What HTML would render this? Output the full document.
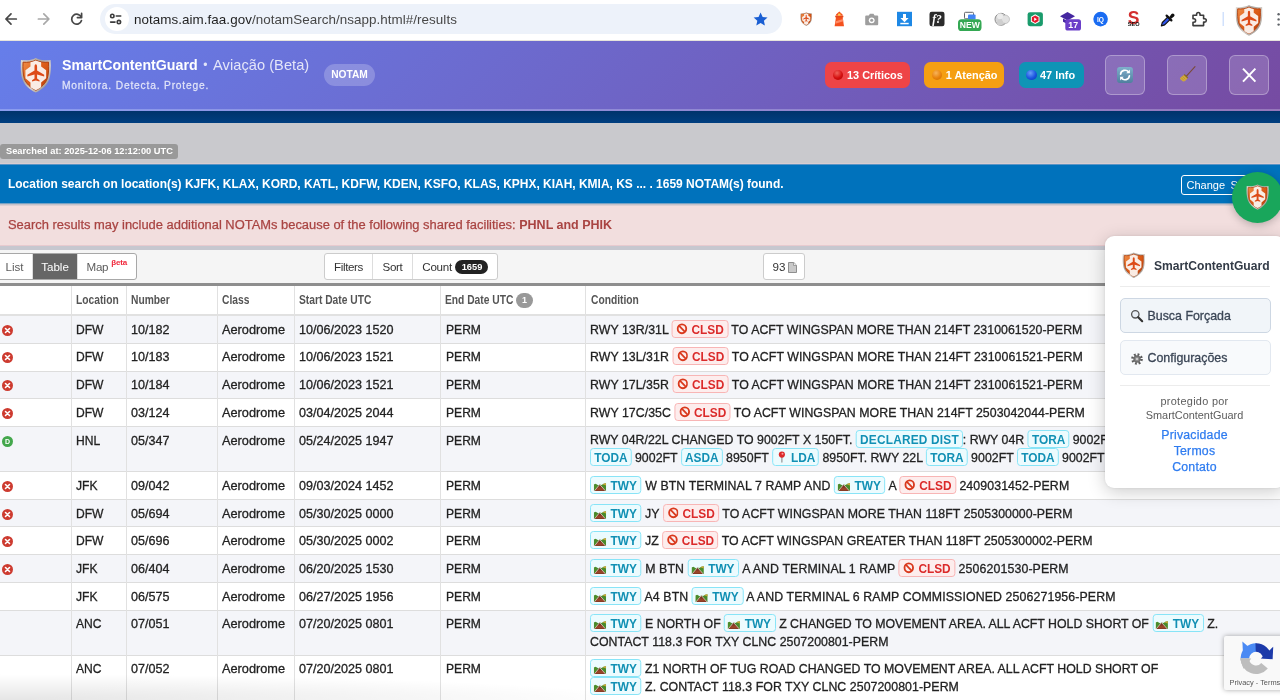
<!DOCTYPE html>
<html lang="en">
<head>
<meta charset="utf-8">
<title>NOTAM Search</title>
<style>
*{box-sizing:border-box;margin:0;padding:0}
html,body{width:1280px;height:700px;overflow:hidden;background:#fff}
body{will-change:transform;font-family:"Liberation Sans",Arial,Helvetica,sans-serif;color:#222;position:relative}
.abs{position:absolute}
/* browser chrome */
#chrome{left:0;top:0;width:1280px;height:41px;background:#fff;border-bottom:1px solid #e6e4dc}
#url{left:100px;top:4px;width:682px;height:30px;border-radius:15px;background:#edf2fa}
#url .tune{left:5px;top:3px;width:24px;height:24px;border-radius:12px;background:#fff}
#url .txt{left:34px;top:.6px;line-height:30px;font-size:13.42px;color:#1f1f1f;white-space:nowrap;letter-spacing:.05px}
#url .txt span{color:#474747}
/* purple header */
#scg{left:0;top:41px;width:1280px;height:70px;background:linear-gradient(135deg,#667eea 0%,#764ba2 100%);border-bottom:2px solid rgba(255,255,255,.24)}
#scg .t1{left:62px;top:14px;font-size:14.2px;font-weight:bold;color:#fff;white-space:nowrap;line-height:20px}
#scg .t1 span{font-weight:normal;color:rgba(255,255,255,.82);font-size:14.6px;letter-spacing:.05px}
#scg .t1 i{font-style:normal;font-weight:normal;font-size:12px;display:inline-block;width:15.5px;text-align:center;position:relative;top:-1px;color:rgba(255,255,255,.8)}
#scg .t2{left:62px;top:38px;font-size:10.25px;color:rgba(255,255,255,.74);white-space:nowrap;letter-spacing:.81px;line-height:14px;-webkit-text-stroke:.3px rgba(255,255,255,.6)}
#scg .pill{left:324px;top:23px;width:51px;height:22px;border-radius:11px;background:rgba(255,255,255,.22);color:#fff;font-size:10.2px;font-weight:bold;text-align:center;line-height:22px}
.bdg{top:21px;height:26px;border-radius:6.5px;color:#fff;font-size:10.9px;font-weight:bold;line-height:26px;white-space:nowrap;padding-left:21px}
.bdg i{position:absolute;left:7.5px;top:7.5px;width:10.5px;height:10.5px;border-radius:6px}
.hbtn{top:14px;width:40px;height:40px;border-radius:6px;background:rgba(255,255,255,.16);border:1px solid rgba(255,255,255,.3)}
/* bands */
#navy{left:0;top:111px;width:1280px;height:12px;background:linear-gradient(#00336b,#003f80)}
#grey{left:0;top:123px;width:1280px;height:41px;background:#c9c9cd}
#tag{left:0;top:144px;width:178px;height:15px;border-radius:3px;background:#999;color:#fff;font-size:9.28px;font-weight:bold;line-height:15px;padding-left:6px;white-space:nowrap}
#blue{left:0;top:163px;width:1280px;height:43px;background:linear-gradient(#d9cdd1 0,#d9cdd1 1px,#5a94c4 1px,#5a94c4 2px,#0072bc 2px,#0072bc 40px,#77a2c4 40px,#77a2c4 41px,#c6c2ca 41px,#c6c2ca 42px,#dcd0d4 42px)}
#blue .txt{left:8px;top:2px;line-height:39px;font-size:11.98px;font-weight:bold;color:#fff;white-space:nowrap}
#chg{left:1181px;top:11.5px;width:70px;height:20px;border:1px solid #fff;border-radius:3px;color:#fff;font-size:11px;line-height:18px;padding-left:4.5px;white-space:nowrap;word-spacing:2.5px}
#pink{left:0;top:206px;width:1280px;height:40px;border-bottom:1px solid #e8cacf;background:#f2dede;color:#a94442;font-size:12.91px;line-height:38px;padding-left:8px;white-space:nowrap;-webkit-text-stroke:.25px #a94442}
#pink b{-webkit-text-stroke:0;font-size:12.5px}
#tb{left:0;top:246px;width:1280px;height:40px;background:#f5f5f5;border-top:4px solid #c7c7cf;border-bottom:3px solid #8e8e8e}
.bg{top:3px;height:27px;border:1px solid #ccc;border-radius:3px;background:#fff;display:flex;overflow:hidden;font-size:11.6px;color:#333}
.bg div{position:relative;height:25px;line-height:25px;text-align:center;border-right:1px solid #ddd;white-space:nowrap}
.bg div:last-child{border-right:0}
.bg .on{background:#666;color:#fff}
.bg sup{color:#f0283c;font-size:8px;font-weight:bold;position:relative;top:-1.5px;left:3px;vertical-align:super;line-height:0;letter-spacing:-.2px}
.bg .cnt{display:inline-block;margin-left:3.5px;width:33px;height:14px;border-radius:7px;background:#222;color:#fff;font-size:9.3px;font-weight:bold;line-height:14px;text-align:center;vertical-align:1px;letter-spacing:0}
/* table */
#th{left:0;top:286px;width:1280px;height:30px;background:#fff;border-bottom:2px solid #e1e1e1}
.h{position:absolute;top:0;line-height:29px;font-size:12.5px;font-weight:bold;color:#555;white-space:nowrap;transform:scaleX(.82);transform-origin:0 50%}
.vl{position:absolute;top:286px;width:1px;height:414px;background:#e1e1e1}
.r{position:absolute;left:0;width:1280px;border-bottom:1px solid #ddd;font-size:13px;color:#222;-webkit-text-stroke:.3px #222}
.r.g{background:#f4f5f9}
.r span.c{position:absolute;line-height:16px;white-space:nowrap;transform-origin:0 0}
.c1{left:75.9px;transform:scaleX(.93)}.c2{left:131px;transform:scaleX(.968)}.c3{left:222px;transform:scaleX(.98)}.c4{left:299px;transform:scaleX(.968)}.c5{left:445.5px;transform:scaleX(.93)}
.r .cond{position:absolute;left:590.4px;font-size:13px;line-height:17.7px;white-space:nowrap;transform:scaleX(.949);transform-origin:0 0}
.k{display:inline-block;position:relative;letter-spacing:0;-webkit-text-stroke:0;height:18px;line-height:19.3px;margin-top:-2px;border-radius:3.5px;font-weight:bold;font-size:12.5px;border:1px solid;vertical-align:baseline}
.k.red{background:#fdeded;border-color:#f9b4b4;color:#db2a2a;padding:0 3.6px 0 19.7px}
.k.cy{background:#ecfbfe;border-color:#86e4f8;color:#1190b4;padding:0 3.2px 0 3.4px}
.k.tw{padding-left:20.6px;padding-right:4px}
.k.pn{padding-left:19px;padding-right:2.8px}
.k svg{position:absolute}
.ic{position:absolute;left:2px;width:11px;height:11px}
#panel{left:1105px;top:236px;width:180px;height:252px;background:#fff;border-radius:9px;box-shadow:0 4px 18px rgba(0,0,0,.2),0 0 3px rgba(0,0,0,.08)}
#panel .ttl{left:49px;top:20.7px;line-height:18px;font-size:12.1px;font-weight:bold;color:#333b47;white-space:nowrap}
#panel .hr{left:14.5px;width:150px;height:1px;background:#ececec}
#panel .pb{left:14.5px;width:151px;height:34.5px;border:1px solid #e2e8f0;border-radius:5px;background:#f8fafc;font-size:12.4px;color:#3b4656;line-height:33px;white-space:nowrap;-webkit-text-stroke:.3px #3b4656}
#panel .sm{left:14.5px;width:150px;text-align:center;font-size:10.9px;color:#5c5c5c;line-height:14px;white-space:nowrap}
#panel .lk{left:14.5px;width:150px;text-align:center;font-size:12.3px;color:#2f7cf0;line-height:15px;white-space:nowrap;letter-spacing:.2px;-webkit-text-stroke:.25px #2f7cf0}
#rc{left:1224px;top:635.5px;width:70px;height:54.5px;background:#f9f9f9;border-radius:2px;box-shadow:0 0 5px rgba(0,0,0,.35)}
</style>
</head>
<body>
<div id="chrome" class="abs">
  <div id="url" class="abs"><div class="tune abs"></div><div class="txt abs">notams.aim.faa.gov<span>/notamSearch/nsapp.html#/results</span></div></div>
</div>
<div id="scg" class="abs">
  <div class="t1 abs">SmartContentGuard<i>•</i><span>Aviação (Beta)</span></div>
  <div class="t2 abs">Monitora. Detecta. Protege.</div>
  <div class="pill abs">NOTAM</div>
  <div class="bdg abs" style="left:825px;width:85px;background:#ee4447;padding-left:22px"><i style="background:radial-gradient(circle at 40% 30%,#f0625a,#d40f0f 55%,#a80000)"></i>13 Críticos</div>
  <div class="bdg abs" style="left:924px;width:80px;background:#f59f12;padding-left:21.8px"><i style="background:radial-gradient(circle at 40% 30%,#f7b45a,#e8820c 55%,#c66a00)"></i>1 Atenção</div>
  <div class="bdg abs" style="left:1018.5px;width:65px;background:#0e94b6;padding-left:21.5px"><i style="background:radial-gradient(circle at 40% 30%,#6aa0f8,#1a55e0 55%,#0a36b0)"></i>47 Info</div>
  <div class="hbtn abs" style="left:1105px"></div>
  <div class="hbtn abs" style="left:1167px"></div>
  <div class="hbtn abs" style="left:1229px"></div>
</div>
<div id="navy" class="abs"></div>
<div id="grey" class="abs"></div>
<div id="tag" class="abs">Searched at: 2025-12-06 12:12:00 UTC</div>
<div id="blue" class="abs"><div class="txt abs">Location search on location(s) KJFK, KLAX, KORD, KATL, KDFW, KDEN, KSFO, KLAS, KPHX, KIAH, KMIA, KS ... . 1659 NOTAM(s) found.</div><div id="chg" class="abs">Change Search</div></div>
<div id="pink" class="abs">Search results may include additional NOTAMs because of the following shared facilities: <b>PHNL and PHIK</b></div>
<div id="tb" class="abs">
  <div class="bg abs" style="left:-3px;width:140px;border-color:#a8a8a8;color:#5c5c5c"><div style="width:35px;text-align:left;padding-left:7.5px">List</div><div class="on" style="width:45px">Table</div><div style="width:58px;text-align:left;padding-left:8.5px;letter-spacing:-.25px">Map<sup>βeta</sup></div></div>
  <div class="bg abs" style="left:324px;width:174px"><div style="width:48px;letter-spacing:-.4px">Filters</div><div style="width:40px;letter-spacing:-.35px">Sort</div><div style="width:84px;text-align:left;padding-left:9.3px;letter-spacing:-.25px">Count<span class="cnt">1659</span></div></div>
  <div class="bg abs" style="left:763px;width:42px"><div style="width:40px;text-align:left;padding-left:8.5px">93<svg style="position:absolute;left:23.5px;top:8px" width="9" height="11" viewBox="0 0 9 11"><path d="M.5.5h5.3L8.5 3.2V10.5H.5z" fill="#c9c9c9" stroke="#8f8f8f"/><path d="M5.5.5v3h3" fill="#eee" stroke="#8f8f8f" stroke-width=".8"/></svg></div></div>
</div>
<div id="th" class="abs">
  <span class="h" style="left:76px">Location</span><span class="h" style="left:131px">Number</span><span class="h" style="left:222px">Class</span><span class="h" style="left:299px">Start Date UTC</span><span class="h" style="left:445px">End Date UTC</span><span class="abs" style="left:516px;top:7px;width:17px;height:15px;border-radius:8px;background:#999;color:#fff;font-size:9px;font-weight:bold;line-height:15px;text-align:center">1</span><span class="h" style="left:591px">Condition</span>
</div>
<div class="r g" style="top:316px;height:28px"><svg class="ic" style="top:8.7px" viewBox="0 0 11 11"><circle cx="5.5" cy="5.5" r="5.5" fill="#cd3b30"/><path d="M3.5 3.5l4 4M7.5 3.5l-4 4" stroke="#fff" stroke-width="1.6" stroke-linecap="round"/></svg><span class="c c1" style="top:6.1px">DFW</span><span class="c c2" style="top:6.1px">10/182</span><span class="c c3" style="top:6.1px">Aerodrome</span><span class="c c4" style="top:6.1px">10/06/2023 1520</span><span class="c c5" style="top:6.1px">PERM</span><div class="cond" style="top:4.75px;letter-spacing:0.04px">RWY 13R/31L <span class="k red"><svg style="left:3.9px;top:2.3px" width="11.8" height="11.6" viewBox="0 0 12 12" preserveAspectRatio="none"><circle cx="6" cy="6" r="4.6" fill="none" stroke="#d9391d" stroke-width="2"/><path d="M2.8 2.8l6.4 6.4" stroke="#d9391d" stroke-width="1.9"/></svg>CLSD</span> TO ACFT WINGSPAN MORE THAN 214FT 2310061520-PERM</div></div>
<div class="r" style="top:344px;height:28px"><svg class="ic" style="top:7.7px" viewBox="0 0 11 11"><circle cx="5.5" cy="5.5" r="5.5" fill="#cd3b30"/><path d="M3.5 3.5l4 4M7.5 3.5l-4 4" stroke="#fff" stroke-width="1.6" stroke-linecap="round"/></svg><span class="c c1" style="top:5.1px">DFW</span><span class="c c2" style="top:5.1px">10/183</span><span class="c c3" style="top:5.1px">Aerodrome</span><span class="c c4" style="top:5.1px">10/06/2023 1521</span><span class="c c5" style="top:5.1px">PERM</span><div class="cond" style="top:3.75px;letter-spacing:0.04px">RWY 13L/31R <span class="k red"><svg style="left:3.9px;top:2.3px" width="11.8" height="11.6" viewBox="0 0 12 12" preserveAspectRatio="none"><circle cx="6" cy="6" r="4.6" fill="none" stroke="#d9391d" stroke-width="2"/><path d="M2.8 2.8l6.4 6.4" stroke="#d9391d" stroke-width="1.9"/></svg>CLSD</span> TO ACFT WINGSPAN MORE THAN 214FT 2310061521-PERM</div></div>
<div class="r g" style="top:372px;height:27px"><svg class="ic" style="top:7.7px" viewBox="0 0 11 11"><circle cx="5.5" cy="5.5" r="5.5" fill="#cd3b30"/><path d="M3.5 3.5l4 4M7.5 3.5l-4 4" stroke="#fff" stroke-width="1.6" stroke-linecap="round"/></svg><span class="c c1" style="top:5.1px">DFW</span><span class="c c2" style="top:5.1px">10/184</span><span class="c c3" style="top:5.1px">Aerodrome</span><span class="c c4" style="top:5.1px">10/06/2023 1521</span><span class="c c5" style="top:5.1px">PERM</span><div class="cond" style="top:3.75px;letter-spacing:0.04px">RWY 17L/35R <span class="k red"><svg style="left:3.9px;top:2.3px" width="11.8" height="11.6" viewBox="0 0 12 12" preserveAspectRatio="none"><circle cx="6" cy="6" r="4.6" fill="none" stroke="#d9391d" stroke-width="2"/><path d="M2.8 2.8l6.4 6.4" stroke="#d9391d" stroke-width="1.9"/></svg>CLSD</span> TO ACFT WINGSPAN MORE THAN 214FT 2310061521-PERM</div></div>
<div class="r" style="top:399px;height:28px"><svg class="ic" style="top:8.7px" viewBox="0 0 11 11"><circle cx="5.5" cy="5.5" r="5.5" fill="#cd3b30"/><path d="M3.5 3.5l4 4M7.5 3.5l-4 4" stroke="#fff" stroke-width="1.6" stroke-linecap="round"/></svg><span class="c c1" style="top:6.1px">DFW</span><span class="c c2" style="top:6.1px">03/124</span><span class="c c3" style="top:6.1px">Aerodrome</span><span class="c c4" style="top:6.1px">03/04/2025 2044</span><span class="c c5" style="top:6.1px">PERM</span><div class="cond" style="top:4.75px;letter-spacing:0.04px">RWY 17C/35C <span class="k red"><svg style="left:3.9px;top:2.3px" width="11.8" height="11.6" viewBox="0 0 12 12" preserveAspectRatio="none"><circle cx="6" cy="6" r="4.6" fill="none" stroke="#d9391d" stroke-width="2"/><path d="M2.8 2.8l6.4 6.4" stroke="#d9391d" stroke-width="1.9"/></svg>CLSD</span> TO ACFT WINGSPAN MORE THAN 214FT 2503042044-PERM</div></div>
<div class="r g" style="top:427px;height:45px"><svg class="ic" style="top:9.1px" viewBox="0 0 11 11"><circle cx="5.5" cy="5.5" r="5.5" fill="#43a74c"/><text x="5.5" y="8" text-anchor="middle" font-family="Liberation Sans,sans-serif" font-weight="bold" font-size="7" fill="#fff">D</text></svg><span class="c c1" style="top:6.1px">HNL</span><span class="c c2" style="top:6.1px">05/347</span><span class="c c3" style="top:6.1px">Aerodrome</span><span class="c c4" style="top:6.1px">05/24/2025 1947</span><span class="c c5" style="top:6.1px">PERM</span><div class="cond" style="top:4.45px"><span style="letter-spacing:0.02px">RWY 04R/22L CHANGED TO 9002FT X 150FT. <span class="k cy" style="letter-spacing:.21px">DECLARED DIST</span>: RWY 04R <span class="k cy">TORA</span> 9002FT <span class="k cy">TODA</span> 9002FT</span><br><span style="letter-spacing:0.025px"><span class="k cy">TODA</span> 9002FT <span class="k cy">ASDA</span> 8950FT <span class="k cy pn"><svg style="left:5.2px;top:2.2px" width="8.4" height="12" viewBox="0 0 8 12" preserveAspectRatio="none"><path d="M4 6v5" stroke="#9a9a9a" stroke-width="1.3" stroke-linecap="round"/><circle cx="4" cy="3.6" r="3.1" fill="#dc2a2a"/><circle cx="4.6" cy="2.7" r="1" fill="#f6a0a0"/></svg>LDA</span> 8950FT. RWY 22L <span class="k cy">TORA</span> 9002FT <span class="k cy">TODA</span> 9002FT <span class="k cy">ASDA</span> 8950FT</span></div></div>
<div class="r" style="top:472px;height:28px"><svg class="ic" style="top:8.7px" viewBox="0 0 11 11"><circle cx="5.5" cy="5.5" r="5.5" fill="#cd3b30"/><path d="M3.5 3.5l4 4M7.5 3.5l-4 4" stroke="#fff" stroke-width="1.6" stroke-linecap="round"/></svg><span class="c c1" style="top:6.1px">JFK</span><span class="c c2" style="top:6.1px">09/042</span><span class="c c3" style="top:6.1px">Aerodrome</span><span class="c c4" style="top:6.1px">09/03/2024 1452</span><span class="c c5" style="top:6.1px">PERM</span><div class="cond" style="top:4.75px;letter-spacing:0.105px"><span class="k cy tw"><svg style="left:2.9px;top:6px" width="13" height="8.2" viewBox="0 0 12.3 8.2" preserveAspectRatio="none"><path d="M0 1.6L1.8.7l2.6 1.5 1.7-.8 1.6.6L9.8.8l2.5-.6v8H0z" fill="#4a8c2b"/><path d="M8.5 1.2l2-.7 1.8-.3v2.3z" fill="#c9a736"/><path d="M5.9 1.5l6.2 6.7H.2z" fill="#7a3524"/><path d="M3.2 5.2h5.6M2 6.8h8.4" stroke="#b2502c" stroke-width=".8"/><path d="M5.9 1.5L.4 8.2M5.9 1.5l6 6.7" stroke="#ddd4cc" stroke-width=".8" fill="none"/></svg>TWY</span> W BTN TERMINAL 7 RAMP AND <span class="k cy tw"><svg style="left:2.9px;top:6px" width="13" height="8.2" viewBox="0 0 12.3 8.2" preserveAspectRatio="none"><path d="M0 1.6L1.8.7l2.6 1.5 1.7-.8 1.6.6L9.8.8l2.5-.6v8H0z" fill="#4a8c2b"/><path d="M8.5 1.2l2-.7 1.8-.3v2.3z" fill="#c9a736"/><path d="M5.9 1.5l6.2 6.7H.2z" fill="#7a3524"/><path d="M3.2 5.2h5.6M2 6.8h8.4" stroke="#b2502c" stroke-width=".8"/><path d="M5.9 1.5L.4 8.2M5.9 1.5l6 6.7" stroke="#ddd4cc" stroke-width=".8" fill="none"/></svg>TWY</span> A <span class="k red"><svg style="left:3.9px;top:2.3px" width="11.8" height="11.6" viewBox="0 0 12 12" preserveAspectRatio="none"><circle cx="6" cy="6" r="4.6" fill="none" stroke="#d9391d" stroke-width="2"/><path d="M2.8 2.8l6.4 6.4" stroke="#d9391d" stroke-width="1.9"/></svg>CLSD</span> 2409031452-PERM</div></div>
<div class="r g" style="top:500px;height:27px"><svg class="ic" style="top:8.7px" viewBox="0 0 11 11"><circle cx="5.5" cy="5.5" r="5.5" fill="#cd3b30"/><path d="M3.5 3.5l4 4M7.5 3.5l-4 4" stroke="#fff" stroke-width="1.6" stroke-linecap="round"/></svg><span class="c c1" style="top:6.1px">DFW</span><span class="c c2" style="top:6.1px">05/694</span><span class="c c3" style="top:6.1px">Aerodrome</span><span class="c c4" style="top:6.1px">05/30/2025 0000</span><span class="c c5" style="top:6.1px">PERM</span><div class="cond" style="top:4.75px;letter-spacing:0.044px"><span class="k cy tw"><svg style="left:2.9px;top:6px" width="13" height="8.2" viewBox="0 0 12.3 8.2" preserveAspectRatio="none"><path d="M0 1.6L1.8.7l2.6 1.5 1.7-.8 1.6.6L9.8.8l2.5-.6v8H0z" fill="#4a8c2b"/><path d="M8.5 1.2l2-.7 1.8-.3v2.3z" fill="#c9a736"/><path d="M5.9 1.5l6.2 6.7H.2z" fill="#7a3524"/><path d="M3.2 5.2h5.6M2 6.8h8.4" stroke="#b2502c" stroke-width=".8"/><path d="M5.9 1.5L.4 8.2M5.9 1.5l6 6.7" stroke="#ddd4cc" stroke-width=".8" fill="none"/></svg>TWY</span> JY <span class="k red"><svg style="left:3.9px;top:2.3px" width="11.8" height="11.6" viewBox="0 0 12 12" preserveAspectRatio="none"><circle cx="6" cy="6" r="4.6" fill="none" stroke="#d9391d" stroke-width="2"/><path d="M2.8 2.8l6.4 6.4" stroke="#d9391d" stroke-width="1.9"/></svg>CLSD</span> TO ACFT WINGSPAN MORE THAN 118FT 2505300000-PERM</div></div>
<div class="r" style="top:527px;height:28px"><svg class="ic" style="top:8.7px" viewBox="0 0 11 11"><circle cx="5.5" cy="5.5" r="5.5" fill="#cd3b30"/><path d="M3.5 3.5l4 4M7.5 3.5l-4 4" stroke="#fff" stroke-width="1.6" stroke-linecap="round"/></svg><span class="c c1" style="top:6.1px">DFW</span><span class="c c2" style="top:6.1px">05/696</span><span class="c c3" style="top:6.1px">Aerodrome</span><span class="c c4" style="top:6.1px">05/30/2025 0002</span><span class="c c5" style="top:6.1px">PERM</span><div class="cond" style="top:4.75px;letter-spacing:0.015px"><span class="k cy tw"><svg style="left:2.9px;top:6px" width="13" height="8.2" viewBox="0 0 12.3 8.2" preserveAspectRatio="none"><path d="M0 1.6L1.8.7l2.6 1.5 1.7-.8 1.6.6L9.8.8l2.5-.6v8H0z" fill="#4a8c2b"/><path d="M8.5 1.2l2-.7 1.8-.3v2.3z" fill="#c9a736"/><path d="M5.9 1.5l6.2 6.7H.2z" fill="#7a3524"/><path d="M3.2 5.2h5.6M2 6.8h8.4" stroke="#b2502c" stroke-width=".8"/><path d="M5.9 1.5L.4 8.2M5.9 1.5l6 6.7" stroke="#ddd4cc" stroke-width=".8" fill="none"/></svg>TWY</span> JZ <span class="k red"><svg style="left:3.9px;top:2.3px" width="11.8" height="11.6" viewBox="0 0 12 12" preserveAspectRatio="none"><circle cx="6" cy="6" r="4.6" fill="none" stroke="#d9391d" stroke-width="2"/><path d="M2.8 2.8l6.4 6.4" stroke="#d9391d" stroke-width="1.9"/></svg>CLSD</span> TO ACFT WINGSPAN GREATER THAN 118FT 2505300002-PERM</div></div>
<div class="r g" style="top:555px;height:28px"><svg class="ic" style="top:8.7px" viewBox="0 0 11 11"><circle cx="5.5" cy="5.5" r="5.5" fill="#cd3b30"/><path d="M3.5 3.5l4 4M7.5 3.5l-4 4" stroke="#fff" stroke-width="1.6" stroke-linecap="round"/></svg><span class="c c1" style="top:6.1px">JFK</span><span class="c c2" style="top:6.1px">06/404</span><span class="c c3" style="top:6.1px">Aerodrome</span><span class="c c4" style="top:6.1px">06/20/2025 1530</span><span class="c c5" style="top:6.1px">PERM</span><div class="cond" style="top:4.75px;letter-spacing:0.124px"><span class="k cy tw"><svg style="left:2.9px;top:6px" width="13" height="8.2" viewBox="0 0 12.3 8.2" preserveAspectRatio="none"><path d="M0 1.6L1.8.7l2.6 1.5 1.7-.8 1.6.6L9.8.8l2.5-.6v8H0z" fill="#4a8c2b"/><path d="M8.5 1.2l2-.7 1.8-.3v2.3z" fill="#c9a736"/><path d="M5.9 1.5l6.2 6.7H.2z" fill="#7a3524"/><path d="M3.2 5.2h5.6M2 6.8h8.4" stroke="#b2502c" stroke-width=".8"/><path d="M5.9 1.5L.4 8.2M5.9 1.5l6 6.7" stroke="#ddd4cc" stroke-width=".8" fill="none"/></svg>TWY</span> M BTN <span class="k cy tw"><svg style="left:2.9px;top:6px" width="13" height="8.2" viewBox="0 0 12.3 8.2" preserveAspectRatio="none"><path d="M0 1.6L1.8.7l2.6 1.5 1.7-.8 1.6.6L9.8.8l2.5-.6v8H0z" fill="#4a8c2b"/><path d="M8.5 1.2l2-.7 1.8-.3v2.3z" fill="#c9a736"/><path d="M5.9 1.5l6.2 6.7H.2z" fill="#7a3524"/><path d="M3.2 5.2h5.6M2 6.8h8.4" stroke="#b2502c" stroke-width=".8"/><path d="M5.9 1.5L.4 8.2M5.9 1.5l6 6.7" stroke="#ddd4cc" stroke-width=".8" fill="none"/></svg>TWY</span> A AND TERMINAL 1 RAMP <span class="k red"><svg style="left:3.9px;top:2.3px" width="11.8" height="11.6" viewBox="0 0 12 12" preserveAspectRatio="none"><circle cx="6" cy="6" r="4.6" fill="none" stroke="#d9391d" stroke-width="2"/><path d="M2.8 2.8l6.4 6.4" stroke="#d9391d" stroke-width="1.9"/></svg>CLSD</span> 2506201530-PERM</div></div>
<div class="r" style="top:583px;height:28px"><span class="c c1" style="top:6.1px">JFK</span><span class="c c2" style="top:6.1px">06/575</span><span class="c c3" style="top:6.1px">Aerodrome</span><span class="c c4" style="top:6.1px">06/27/2025 1956</span><span class="c c5" style="top:6.1px">PERM</span><div class="cond" style="top:4.75px;letter-spacing:0.115px"><span class="k cy tw"><svg style="left:2.9px;top:6px" width="13" height="8.2" viewBox="0 0 12.3 8.2" preserveAspectRatio="none"><path d="M0 1.6L1.8.7l2.6 1.5 1.7-.8 1.6.6L9.8.8l2.5-.6v8H0z" fill="#4a8c2b"/><path d="M8.5 1.2l2-.7 1.8-.3v2.3z" fill="#c9a736"/><path d="M5.9 1.5l6.2 6.7H.2z" fill="#7a3524"/><path d="M3.2 5.2h5.6M2 6.8h8.4" stroke="#b2502c" stroke-width=".8"/><path d="M5.9 1.5L.4 8.2M5.9 1.5l6 6.7" stroke="#ddd4cc" stroke-width=".8" fill="none"/></svg>TWY</span> A4 BTN <span class="k cy tw"><svg style="left:2.9px;top:6px" width="13" height="8.2" viewBox="0 0 12.3 8.2" preserveAspectRatio="none"><path d="M0 1.6L1.8.7l2.6 1.5 1.7-.8 1.6.6L9.8.8l2.5-.6v8H0z" fill="#4a8c2b"/><path d="M8.5 1.2l2-.7 1.8-.3v2.3z" fill="#c9a736"/><path d="M5.9 1.5l6.2 6.7H.2z" fill="#7a3524"/><path d="M3.2 5.2h5.6M2 6.8h8.4" stroke="#b2502c" stroke-width=".8"/><path d="M5.9 1.5L.4 8.2M5.9 1.5l6 6.7" stroke="#ddd4cc" stroke-width=".8" fill="none"/></svg>TWY</span> A AND TERMINAL 6 RAMP COMMISSIONED 2506271956-PERM</div></div>
<div class="r g" style="top:611px;height:45px"><span class="c c1" style="top:5.1px">ANC</span><span class="c c2" style="top:5.1px">07/051</span><span class="c c3" style="top:5.1px">Aerodrome</span><span class="c c4" style="top:5.1px">07/20/2025 0801</span><span class="c c5" style="top:5.1px">PERM</span><div class="cond" style="top:3.95px"><span style="letter-spacing:-0.015px"><span class="k cy tw"><svg style="left:2.9px;top:6px" width="13" height="8.2" viewBox="0 0 12.3 8.2" preserveAspectRatio="none"><path d="M0 1.6L1.8.7l2.6 1.5 1.7-.8 1.6.6L9.8.8l2.5-.6v8H0z" fill="#4a8c2b"/><path d="M8.5 1.2l2-.7 1.8-.3v2.3z" fill="#c9a736"/><path d="M5.9 1.5l6.2 6.7H.2z" fill="#7a3524"/><path d="M3.2 5.2h5.6M2 6.8h8.4" stroke="#b2502c" stroke-width=".8"/><path d="M5.9 1.5L.4 8.2M5.9 1.5l6 6.7" stroke="#ddd4cc" stroke-width=".8" fill="none"/></svg>TWY</span> E NORTH OF <span class="k cy tw"><svg style="left:2.9px;top:6px" width="13" height="8.2" viewBox="0 0 12.3 8.2" preserveAspectRatio="none"><path d="M0 1.6L1.8.7l2.6 1.5 1.7-.8 1.6.6L9.8.8l2.5-.6v8H0z" fill="#4a8c2b"/><path d="M8.5 1.2l2-.7 1.8-.3v2.3z" fill="#c9a736"/><path d="M5.9 1.5l6.2 6.7H.2z" fill="#7a3524"/><path d="M3.2 5.2h5.6M2 6.8h8.4" stroke="#b2502c" stroke-width=".8"/><path d="M5.9 1.5L.4 8.2M5.9 1.5l6 6.7" stroke="#ddd4cc" stroke-width=".8" fill="none"/></svg>TWY</span> Z CHANGED TO MOVEMENT AREA. ALL ACFT HOLD SHORT OF <span class="k cy tw"><svg style="left:2.9px;top:6px" width="13" height="8.2" viewBox="0 0 12.3 8.2" preserveAspectRatio="none"><path d="M0 1.6L1.8.7l2.6 1.5 1.7-.8 1.6.6L9.8.8l2.5-.6v8H0z" fill="#4a8c2b"/><path d="M8.5 1.2l2-.7 1.8-.3v2.3z" fill="#c9a736"/><path d="M5.9 1.5l6.2 6.7H.2z" fill="#7a3524"/><path d="M3.2 5.2h5.6M2 6.8h8.4" stroke="#b2502c" stroke-width=".8"/><path d="M5.9 1.5L.4 8.2M5.9 1.5l6 6.7" stroke="#ddd4cc" stroke-width=".8" fill="none"/></svg>TWY</span> Z.</span><br><span style="letter-spacing:0.035px">CONTACT 118.3 FOR TXY CLNC 2507200801-PERM</span></div></div>
<div class="r" style="top:656px;height:46px"><span class="c c1" style="top:5.1px">ANC</span><span class="c c2" style="top:5.1px">07/052</span><span class="c c3" style="top:5.1px">Aerodrome</span><span class="c c4" style="top:5.1px">07/20/2025 0801</span><span class="c c5" style="top:5.1px">PERM</span><div class="cond" style="top:3.95px"><span class="k cy tw"><svg style="left:2.9px;top:6px" width="13" height="8.2" viewBox="0 0 12.3 8.2" preserveAspectRatio="none"><path d="M0 1.6L1.8.7l2.6 1.5 1.7-.8 1.6.6L9.8.8l2.5-.6v8H0z" fill="#4a8c2b"/><path d="M8.5 1.2l2-.7 1.8-.3v2.3z" fill="#c9a736"/><path d="M5.9 1.5l6.2 6.7H.2z" fill="#7a3524"/><path d="M3.2 5.2h5.6M2 6.8h8.4" stroke="#b2502c" stroke-width=".8"/><path d="M5.9 1.5L.4 8.2M5.9 1.5l6 6.7" stroke="#ddd4cc" stroke-width=".8" fill="none"/></svg>TWY</span> Z1 NORTH OF TUG ROAD CHANGED TO MOVEMENT AREA. ALL ACFT HOLD SHORT OF<br><span style="letter-spacing:0.055px"><span class="k cy tw"><svg style="left:2.9px;top:6px" width="13" height="8.2" viewBox="0 0 12.3 8.2" preserveAspectRatio="none"><path d="M0 1.6L1.8.7l2.6 1.5 1.7-.8 1.6.6L9.8.8l2.5-.6v8H0z" fill="#4a8c2b"/><path d="M8.5 1.2l2-.7 1.8-.3v2.3z" fill="#c9a736"/><path d="M5.9 1.5l6.2 6.7H.2z" fill="#7a3524"/><path d="M3.2 5.2h5.6M2 6.8h8.4" stroke="#b2502c" stroke-width=".8"/><path d="M5.9 1.5L.4 8.2M5.9 1.5l6 6.7" stroke="#ddd4cc" stroke-width=".8" fill="none"/></svg>TWY</span> Z. CONTACT 118.3 FOR TXY CLNC 2507200801-PERM</span></div></div>
<div class="vl" style="left:71px"></div>
<div class="vl" style="left:126px"></div>
<div class="vl" style="left:217px"></div>
<div class="vl" style="left:294px"></div>
<div class="vl" style="left:440px"></div>
<div class="vl" style="left:585px"></div>
<!-- browser chrome icons -->
<svg class="abs" style="left:0;top:0" width="1280" height="40" viewBox="0 0 1280 40">
  <g fill="none" stroke="#474747" stroke-width="1.7" stroke-linecap="round" stroke-linejoin="round">
    <path d="M16.3 19H6.2M11 13.9L5.9 19l5.1 5.1"/>
    <path d="M38.4 19h10.1M43.8 13.9l5.1 5.1-5.1 5.1" stroke="#a8a8a8"/>
    <path d="M81.3 17.2A5 5 0 1 0 81.5 20.6" stroke-width="1.7"/>
    <path d="M81.6 13.4v4.2h-4.2" stroke-width="1.7"/>
  </g>
  <g fill="none" stroke="#3c3c3c" stroke-width="1.6" stroke-linecap="round">
    <circle cx="112.3" cy="16" r="1.7"/><path d="M116.3 16h4.4"/>
    <circle cx="118.9" cy="22.1" r="1.7"/><path d="M110.6 22.1h4.4"/>
  </g>
  <path d="M760.6 12.4l2.05 4.5 4.9.55-3.65 3.3 1 4.85-4.3-2.5-4.3 2.5 1-4.85-3.65-3.3 4.9-.55z" fill="#1a5fd3"/>
  <!-- lighthouse -->
  <g>
    <path d="M836 17h6.6l1.4 9.2h-9.4z" fill="#f4511e"/>
    <path d="M835.6 21.2l7.4-2.2.3 2.2-7.9 2.5z" fill="#ff8a65"/>
    <rect x="835.2" y="15.4" width="8.2" height="2" rx=".6" fill="#e64a19"/>
    <path d="M839.3 11.4l3.3 3.2v1h-6.6v-1z" fill="#f4511e"/>
    <rect x="838.1" y="13.6" width="2.4" height="2" fill="#ffd54f"/>
  </g>
  <!-- camera -->
  <g>
    <path d="M866.2 15.6h2.6l1.1-1.8h3.6l1.1 1.8h2.6a1 1 0 0 1 1 1v7.6a1 1 0 0 1-1 1h-11a1 1 0 0 1-1-1v-7.6a1 1 0 0 1 1-1z" fill="#9e9e9e"/>
    <circle cx="871.7" cy="20.3" r="2.9" fill="#fff"/><circle cx="871.7" cy="20.3" r="1.5" fill="#9e9e9e"/>
  </g>
  <!-- download -->
  <g>
    <rect x="897" y="11.8" width="15" height="14.4" fill="#1e88e5"/>
    <path d="M903 14h3v4h2.6l-4.1 4.2-4.1-4.2h2.6z" fill="#fff"/><rect x="900.3" y="22.8" width="8.4" height="1.5" fill="#fff"/>
  </g>
  <!-- f? -->
  <g>
    <rect x="929.5" y="11.8" width="15" height="14.4" rx="2.2" fill="#2b2b2b"/>
    <text x="937" y="23" text-anchor="middle" font-family="Liberation Serif,serif" font-style="italic" font-weight="bold" font-size="11.5" fill="#fff">f?</text>
  </g>
  <!-- NEW -->
  <g>
    <rect x="964.5" y="12.3" width="9" height="6.5" rx="1" fill="#fff" stroke="#5f6368" stroke-width="1"/>
    <rect x="968" y="14.4" width="7.6" height="5" rx="1" fill="#4285f4"/>
    <rect x="958" y="19.3" width="23.5" height="11.8" rx="3.6" fill="#34a853"/>
    <text x="969.8" y="28.4" text-anchor="middle" font-family="Liberation Sans,sans-serif" font-weight="bold" font-size="8.6" fill="#fff">NEW</text>
  </g>
  <!-- grey blob -->
  <g>
    <circle cx="1001" cy="19.3" r="6" fill="#d7d7d7" stroke="#8e8e8e" stroke-width="1"/>
    <circle cx="1005.3" cy="19.3" r="4.2" fill="#e2e2e2" stroke="#b4b4b4" stroke-width=".7"/>
    <circle cx="1000" cy="16.2" r="3" fill="#ececec"/><circle cx="1000" cy="22.6" r="3" fill="#cfcfcf"/>
  </g>
  <!-- green/red -->
  <g>
    <rect x="1027.6" y="12.2" width="15.3" height="14" rx="2.4" fill="#1a9b6c"/>
    <path d="M1035.2 14.3l4.3 2.45v4.9l-4.3 2.45-4.3-2.45v-4.9z" fill="#fff"/>
    <path d="M1035.2 15.4l3.35 1.9v3.8l-3.35 1.9-3.35-1.9v-3.8z" fill="#e5192d"/>
    <path d="M1034.2 17.5l2.7 1.7-2.7 1.7z" fill="#fff"/>
  </g>
  <!-- grad cap + 17 -->
  <g>
    <path d="M1067.5 12l7.5 4.3-7.5 4.3-7.5-4.3z" fill="#4527a0"/>
    <path d="M1063 18.5v3.2l4.5 2.4v-3z" fill="#4527a0"/>
    <rect x="1065.3" y="19.2" width="15.7" height="11.4" rx="2.6" fill="#6a3fc9"/>
    <text x="1073.2" y="28.2" text-anchor="middle" font-family="Liberation Sans,sans-serif" font-weight="bold" font-size="8.8" fill="#fff">17</text>
  </g>
  <!-- IQ -->
  <g>
    <circle cx="1100.6" cy="19.1" r="7.3" fill="#1a6cf2"/>
    <text x="1100.4" y="21.6" text-anchor="middle" font-family="Liberation Sans,sans-serif" font-weight="bold" font-size="6.6" fill="#fff">IQ</text>
    <rect x="1096.4" y="16" width="8.3" height="6.6" fill="none" stroke="#0b2a66" stroke-width=".01"/>
  </g>
  <!-- SEO -->
  <g>
    <text x="1133.6" y="24.2" text-anchor="middle" font-family="Liberation Sans,sans-serif" font-weight="bold" font-size="17.5" fill="#d32f2f">S</text>
    <text x="1133.6" y="25.6" text-anchor="middle" font-family="Liberation Sans,sans-serif" font-weight="bold" font-size="5.6" fill="#111">SEO</text>
  </g>
  <!-- eyedropper -->
  <g>
    <path d="M1161.3 25.9l1-3.4 5.6-5.6 2.4 2.4-5.6 5.6z" fill="#2f54eb" stroke="#111" stroke-width="1.1" stroke-linejoin="round"/>
    <path d="M1166.6 15.6l4.8 4.8" stroke="#111" stroke-width="2.2" stroke-linecap="round"/>
    <path d="M1169.3 16.9l2.2-2.9a1.7 1.7 0 0 1 2.5 2.5l-2.9 2.2z" fill="#111"/>
  </g>
  <!-- puzzle -->
  <path d="M1193 15.2h3.6v-1a1.7 1.7 0 0 1 3.4 0v1h3.6v3.5h1a1.7 1.7 0 0 1 0 3.4h-1v3.5H1193v-3.4h.9a1.7 1.7 0 0 0 0-3.4h-.9z" fill="none" stroke="#3c3c3c" stroke-width="1.6" stroke-linejoin="round"/>
  <rect x="1222.6" y="12" width="1.2" height="14" fill="#c6dafc"/>
  <g fill="#5f6368"><circle cx="1278.6" cy="14.2" r="1.2"/><circle cx="1278.6" cy="19.4" r="1.2"/><circle cx="1278.6" cy="24.6" r="1.2"/></g>
</svg>
<!-- shields -->
<svg class="abs" style="left:19.8px;top:56.8px" width="31.6" height="36.4" viewBox="0 0 32 36"><defs><linearGradient id="og" x1="0" y1="0" x2="1" y2="1"><stop offset="0" stop-color="#f0904a"/><stop offset=".45" stop-color="#df5f1a"/><stop offset="1" stop-color="#b93d08"/></linearGradient><linearGradient id="sg" x1="0" y1="0" x2="1" y2="1"><stop offset="0" stop-color="#e9e4de"/><stop offset=".35" stop-color="#a8a099"/><stop offset=".6" stop-color="#d8d2cc"/><stop offset="1" stop-color="#7d746c"/></linearGradient></defs><path d="M16 .5C12.5 2.6 6 3.4 1 2.6 .5 10 .8 17 2.4 22 4.3 27.8 9.5 32.3 16 35.6 22.5 32.3 27.7 27.8 29.6 22 31.2 17 31.5 10 31 2.6 26 3.4 19.5 2.6 16 .5z" fill="url(#sg)"/><path d="M16 2.8C12.8 4.6 7.5 5.3 3.1 4.8 2.7 11 3 16.8 4.4 21.4 6.1 26.5 10.5 30.5 16 33.3 21.5 30.5 25.9 26.5 27.6 21.4 29 16.8 29.3 11 28.9 4.8 24.5 5.3 19.2 4.6 16 2.8z" fill="url(#og)" stroke="#b03e0a" stroke-width="1"/><path d="M10.6 5c1.9-.4 3.7-.9 5.4-1.8 1.7.9 3.5 1.4 5.4 1.8V9.3l5.1 3.6v8.2l-5.1 4.3v4.7c-1.5 1.1-3.3 2.1-5.4 3.1-2.1-1-3.9-2-5.4-3.1v-4.7l-5.1-4.3v-8.2l5.1-3.6z" fill="#faece4"/><path d="M16 7c-.9 0-1.3 1.1-1.3 2.4v3.9l-7.2 4.3v1.7l7.2-2.1v4.2l-2.5 1.7v1.2l3.8-.9 3.8.9v-1.2l-2.5-1.7v-4.2l7.2 2.1v-1.7l-7.2-4.3V9.4c0-1.3-.4-2.4-1.3-2.4z" fill="#dd4a17"/></svg>
<svg class="abs" style="left:800.3px;top:12px" width="12.4" height="14.2" viewBox="0 0 32 36"><defs><linearGradient id="og" x1="0" y1="0" x2="1" y2="1"><stop offset="0" stop-color="#f0904a"/><stop offset=".45" stop-color="#df5f1a"/><stop offset="1" stop-color="#b93d08"/></linearGradient><linearGradient id="sg" x1="0" y1="0" x2="1" y2="1"><stop offset="0" stop-color="#e9e4de"/><stop offset=".35" stop-color="#a8a099"/><stop offset=".6" stop-color="#d8d2cc"/><stop offset="1" stop-color="#7d746c"/></linearGradient></defs><path d="M16 .5C12.5 2.6 6 3.4 1 2.6 .5 10 .8 17 2.4 22 4.3 27.8 9.5 32.3 16 35.6 22.5 32.3 27.7 27.8 29.6 22 31.2 17 31.5 10 31 2.6 26 3.4 19.5 2.6 16 .5z" fill="url(#sg)"/><path d="M16 2.8C12.8 4.6 7.5 5.3 3.1 4.8 2.7 11 3 16.8 4.4 21.4 6.1 26.5 10.5 30.5 16 33.3 21.5 30.5 25.9 26.5 27.6 21.4 29 16.8 29.3 11 28.9 4.8 24.5 5.3 19.2 4.6 16 2.8z" fill="url(#og)" stroke="#b03e0a" stroke-width="1"/><path d="M10.6 5c1.9-.4 3.7-.9 5.4-1.8 1.7.9 3.5 1.4 5.4 1.8V9.3l5.1 3.6v8.2l-5.1 4.3v4.7c-1.5 1.1-3.3 2.1-5.4 3.1-2.1-1-3.9-2-5.4-3.1v-4.7l-5.1-4.3v-8.2l5.1-3.6z" fill="#faece4"/><path d="M16 7c-.9 0-1.3 1.1-1.3 2.4v3.9l-7.2 4.3v1.7l7.2-2.1v4.2l-2.5 1.7v1.2l3.8-.9 3.8.9v-1.2l-2.5-1.7v-4.2l7.2 2.1v-1.7l-7.2-4.3V9.4c0-1.3-.4-2.4-1.3-2.4z" fill="#dd4a17"/></svg>
<svg class="abs" style="left:1235px;top:3.6px" width="28" height="32.8" viewBox="0 0 32 36"><defs><linearGradient id="og" x1="0" y1="0" x2="1" y2="1"><stop offset="0" stop-color="#f0904a"/><stop offset=".45" stop-color="#df5f1a"/><stop offset="1" stop-color="#b93d08"/></linearGradient><linearGradient id="sg" x1="0" y1="0" x2="1" y2="1"><stop offset="0" stop-color="#e9e4de"/><stop offset=".35" stop-color="#a8a099"/><stop offset=".6" stop-color="#d8d2cc"/><stop offset="1" stop-color="#7d746c"/></linearGradient></defs><path d="M16 .5C12.5 2.6 6 3.4 1 2.6 .5 10 .8 17 2.4 22 4.3 27.8 9.5 32.3 16 35.6 22.5 32.3 27.7 27.8 29.6 22 31.2 17 31.5 10 31 2.6 26 3.4 19.5 2.6 16 .5z" fill="url(#sg)"/><path d="M16 2.8C12.8 4.6 7.5 5.3 3.1 4.8 2.7 11 3 16.8 4.4 21.4 6.1 26.5 10.5 30.5 16 33.3 21.5 30.5 25.9 26.5 27.6 21.4 29 16.8 29.3 11 28.9 4.8 24.5 5.3 19.2 4.6 16 2.8z" fill="url(#og)" stroke="#b03e0a" stroke-width="1"/><path d="M10.6 5c1.9-.4 3.7-.9 5.4-1.8 1.7.9 3.5 1.4 5.4 1.8V9.3l5.1 3.6v8.2l-5.1 4.3v4.7c-1.5 1.1-3.3 2.1-5.4 3.1-2.1-1-3.9-2-5.4-3.1v-4.7l-5.1-4.3v-8.2l5.1-3.6z" fill="#faece4"/><path d="M16 7c-.9 0-1.3 1.1-1.3 2.4v3.9l-7.2 4.3v1.7l7.2-2.1v4.2l-2.5 1.7v1.2l3.8-.9 3.8.9v-1.2l-2.5-1.7v-4.2l7.2 2.1v-1.7l-7.2-4.3V9.4c0-1.3-.4-2.4-1.3-2.4z" fill="#dd4a17"/></svg>
<!-- header button icons -->
<svg class="abs" style="left:1117px;top:66.5px" width="16" height="16" viewBox="0 0 16 16">
  <defs><linearGradient id="rg" x1="0" y1="0" x2="0" y2="1"><stop offset="0" stop-color="#7fb0cc"/><stop offset="1" stop-color="#4f7f9e"/></linearGradient></defs>
  <rect x="0" y="0" width="16" height="16" rx="3" fill="url(#rg)"/>
  <g fill="none" stroke="#fff" stroke-width="1.7" stroke-linecap="round">
    <path d="M3.6 7.2A4.5 4.5 0 0 1 11.6 5"/><path d="M12.4 8.8A4.5 4.5 0 0 1 4.4 11"/>
  </g>
  <path d="M12.9 2.6v3.6H9.3z" fill="#fff"/><path d="M3.1 13.4V9.8h3.6z" fill="#fff"/>
</svg>
<svg class="abs" style="left:1179px;top:65px" width="18" height="18" viewBox="0 0 18 18">
  <path d="M16 1.6L7.2 11.4" stroke="#7a4a3a" stroke-width="1.1" stroke-linecap="round"/>
  <path d="M5.6 9.8l3 2.9c-.6 1.9-2.5 3.6-4.6 3.9L.9 13.8c.9-1.6 2.6-3.4 4.7-4z" fill="#d2aa3c"/>
  <path d="M5.2 9.5l3.6 3.5" stroke="#8a6a20" stroke-width="1.2"/>
  <path d="M2.2 12.6l2.8 2.9M3.5 11.3l2.9 3" stroke="#a88424" stroke-width=".5"/>
</svg>
<svg class="abs" style="left:1241px;top:67px" width="16" height="16" viewBox="0 0 16 16"><path d="M2 1.6l12.4 13M14.4 1.6L2 14.6" stroke="#fff" stroke-width="2" stroke-linecap="butt"/></svg>
<!-- green floating button -->
<div class="abs" style="left:1231.7px;top:172px;width:51px;height:51px;border-radius:26px;background:#19a65b;box-shadow:0 2px 8px rgba(0,0,0,.25)"></div>
<svg class="abs" style="left:1245.8px;top:184.4px" width="23.2" height="26.2" viewBox="0 0 32 36"><defs><linearGradient id="og" x1="0" y1="0" x2="1" y2="1"><stop offset="0" stop-color="#f0904a"/><stop offset=".45" stop-color="#df5f1a"/><stop offset="1" stop-color="#b93d08"/></linearGradient><linearGradient id="sg" x1="0" y1="0" x2="1" y2="1"><stop offset="0" stop-color="#e9e4de"/><stop offset=".35" stop-color="#a8a099"/><stop offset=".6" stop-color="#d8d2cc"/><stop offset="1" stop-color="#7d746c"/></linearGradient></defs><path d="M16 .5C12.5 2.6 6 3.4 1 2.6 .5 10 .8 17 2.4 22 4.3 27.8 9.5 32.3 16 35.6 22.5 32.3 27.7 27.8 29.6 22 31.2 17 31.5 10 31 2.6 26 3.4 19.5 2.6 16 .5z" fill="url(#sg)"/><path d="M16 2.8C12.8 4.6 7.5 5.3 3.1 4.8 2.7 11 3 16.8 4.4 21.4 6.1 26.5 10.5 30.5 16 33.3 21.5 30.5 25.9 26.5 27.6 21.4 29 16.8 29.3 11 28.9 4.8 24.5 5.3 19.2 4.6 16 2.8z" fill="url(#og)" stroke="#b03e0a" stroke-width="1"/><path d="M10.6 5c1.9-.4 3.7-.9 5.4-1.8 1.7.9 3.5 1.4 5.4 1.8V9.3l5.1 3.6v8.2l-5.1 4.3v4.7c-1.5 1.1-3.3 2.1-5.4 3.1-2.1-1-3.9-2-5.4-3.1v-4.7l-5.1-4.3v-8.2l5.1-3.6z" fill="#faece4"/><path d="M16 7c-.9 0-1.3 1.1-1.3 2.4v3.9l-7.2 4.3v1.7l7.2-2.1v4.2l-2.5 1.7v1.2l3.8-.9 3.8.9v-1.2l-2.5-1.7v-4.2l7.2 2.1v-1.7l-7.2-4.3V9.4c0-1.3-.4-2.4-1.3-2.4z" fill="#dd4a17"/></svg>
<!-- side panel -->
<div id="panel" class="abs">
  <div class="ttl abs">SmartContentGuard</div>
  <div class="hr abs" style="top:49.5px"></div>
  <div class="pb abs" style="top:62px;background:#f1f5f9;border-color:#cdd7e3"><span class="abs" style="left:27px;top:.7px">Busca Forçada</span>
    <svg class="abs" style="left:9.5px;top:10px" width="14" height="14" viewBox="0 0 14 14"><circle cx="5.3" cy="5.3" r="3.7" fill="#e8eef5" stroke="#555" stroke-width="1.3"/><path d="M8.2 8.2l4 4" stroke="#333" stroke-width="2.1" stroke-linecap="round"/></svg></div>
  <div class="pb abs" style="top:104px"><span class="abs" style="left:27px;top:.7px">Configurações</span>
    <svg class="abs" style="left:10.5px;top:11.5px" width="12" height="12" viewBox="0 0 14 14"><circle cx="7" cy="7" r="5.2" fill="none" stroke="#5a5a5a" stroke-width="3.2" stroke-dasharray="2.04 2.04"/><circle cx="7" cy="7" r="4.3" fill="#6e6e6e"/><circle cx="7" cy="7" r="2.6" fill="#8f8f8f"/><circle cx="7" cy="7" r="1.3" fill="#d8d8d8"/></svg></div>
  <div class="hr abs" style="top:149px"></div>
  <div class="sm abs" style="top:157.5px;letter-spacing:.3px">protegido por</div>
  <div class="sm abs" style="top:171.5px">SmartContentGuard</div>
  <div class="lk abs" style="top:192px">Privacidade</div>
  <div class="lk abs" style="top:207.5px">Termos</div>
  <div class="lk abs" style="top:224px">Contato</div>
</div>
<svg class="abs" style="left:1122px;top:251.5px" width="23.5" height="26.5" viewBox="0 0 32 36"><defs><linearGradient id="og" x1="0" y1="0" x2="1" y2="1"><stop offset="0" stop-color="#f0904a"/><stop offset=".45" stop-color="#df5f1a"/><stop offset="1" stop-color="#b93d08"/></linearGradient><linearGradient id="sg" x1="0" y1="0" x2="1" y2="1"><stop offset="0" stop-color="#e9e4de"/><stop offset=".35" stop-color="#a8a099"/><stop offset=".6" stop-color="#d8d2cc"/><stop offset="1" stop-color="#7d746c"/></linearGradient></defs><path d="M16 .5C12.5 2.6 6 3.4 1 2.6 .5 10 .8 17 2.4 22 4.3 27.8 9.5 32.3 16 35.6 22.5 32.3 27.7 27.8 29.6 22 31.2 17 31.5 10 31 2.6 26 3.4 19.5 2.6 16 .5z" fill="url(#sg)"/><path d="M16 2.8C12.8 4.6 7.5 5.3 3.1 4.8 2.7 11 3 16.8 4.4 21.4 6.1 26.5 10.5 30.5 16 33.3 21.5 30.5 25.9 26.5 27.6 21.4 29 16.8 29.3 11 28.9 4.8 24.5 5.3 19.2 4.6 16 2.8z" fill="url(#og)" stroke="#b03e0a" stroke-width="1"/><path d="M10.6 5c1.9-.4 3.7-.9 5.4-1.8 1.7.9 3.5 1.4 5.4 1.8V9.3l5.1 3.6v8.2l-5.1 4.3v4.7c-1.5 1.1-3.3 2.1-5.4 3.1-2.1-1-3.9-2-5.4-3.1v-4.7l-5.1-4.3v-8.2l5.1-3.6z" fill="#faece4"/><path d="M16 7c-.9 0-1.3 1.1-1.3 2.4v3.9l-7.2 4.3v1.7l7.2-2.1v4.2l-2.5 1.7v1.2l3.8-.9 3.8.9v-1.2l-2.5-1.7v-4.2l7.2 2.1v-1.7l-7.2-4.3V9.4c0-1.3-.4-2.4-1.3-2.4z" fill="#dd4a17"/></svg>
<!-- recaptcha -->
<div id="rc" class="abs">
  <svg class="abs" style="left:12.5px;top:3px" width="38" height="38" viewBox="0 0 64 64">
    <path d="M6 33A26 26 0 0 1 32.9 7L32.4 21.5A11.5 11.5 0 0 0 20.5 33z" fill="#4a8af4"/>
    <path d="M9 4l1 18 16-3z" fill="#4a8af4"/>
    <path d="M31.1 7A26 26 0 0 1 58 32.1L43.5 32.6A11.5 11.5 0 0 0 31.6 21.5z" fill="#1c3aa9"/>
    <path d="M61 13l-1 21-20-1z" fill="#1c3aa9"/>
    <path d="M51.9 49.7A26 26 0 0 1 6 33L20.5 33A11.5 11.5 0 0 0 40.8 40.4z" fill="#bdbdbd"/>
    <path d="M5 33h19l-13 17z" fill="#bdbdbd"/>
  </svg>
  <div class="abs" style="left:5.5px;top:42.5px;font-size:7.4px;color:#555;white-space:nowrap;line-height:10px">Privacy - Terms</div>
</div>
<div class="abs" style="left:0;top:660px;width:760px;height:40px;background:radial-gradient(ellipse 640px 26px at 0% 100%,rgba(0,0,0,.1),rgba(0,0,0,0) 100%);pointer-events:none"></div>

</body>
</html>
